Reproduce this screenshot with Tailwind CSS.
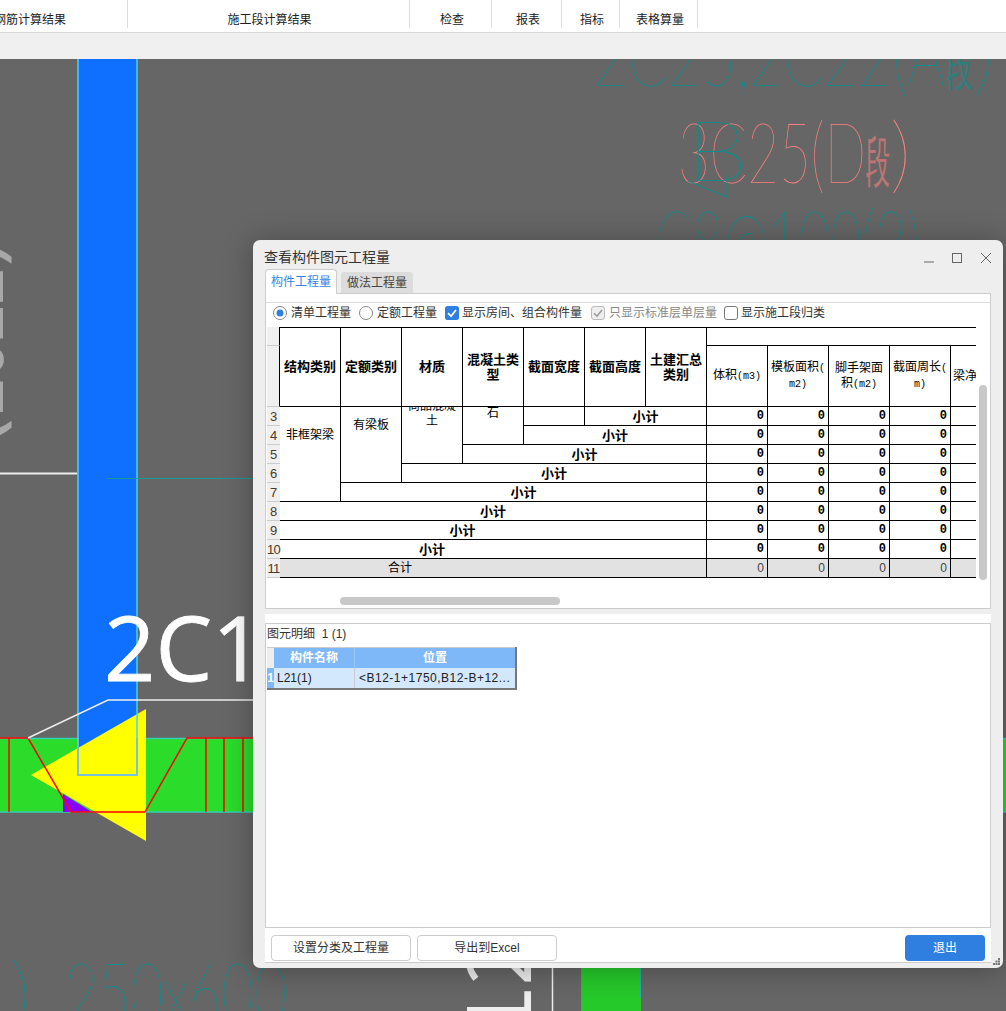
<!DOCTYPE html>
<html lang="en">
<head>
  <meta charset="UTF-8">
  <title>查看构件图元工程量</title>
  <script src="https://cdn.jsdelivr.net/npm/@tailwindcss/browser@4"></script>
</head>
<body class="font-['Liberation_Sans','Noto_Sans_CJK_SC',sans-serif] text-xs text-[#222]">
<div class="relative w-[1006px] h-[1011px] overflow-hidden bg-[#666]">

  <!-- Ribbon -->
  <div class="flex h-[33px] bg-white border-b border-[#d8d8d8] overflow-hidden">
    <div class="w-[128px] h-[28px] shrink-0 border-r border-[#ddd] flex items-end"><span class="-ml-[6px]">钢筋计算结果</span></div>
    <div class="w-[282px] h-[28px] shrink-0 border-r border-[#ddd] flex items-end justify-center pl-[2px]">施工段计算结果</div>
    <div class="w-[82px] h-[28px] shrink-0 border-r border-[#ddd] flex items-end justify-center pl-[3px]">检查</div>
    <div class="w-[70px] h-[28px] shrink-0 border-r border-[#ddd] flex items-end justify-center pl-[3px]">报表</div>
    <div class="w-[58px] h-[28px] shrink-0 border-r border-[#ddd] flex items-end justify-center pl-[3px]">指标</div>
    <div class="w-[78px] h-[28px] shrink-0 border-r border-[#ddd] flex items-end justify-center pl-[3px]">表格算量</div>
  </div>
  <div class="h-[26px] bg-[#f0f0f0]"></div>

  <!-- CAD canvas -->
  <svg class="block w-[1006px] h-[952px]" viewBox="0 59 1006 952" xmlns="http://www.w3.org/2000/svg">
    <rect x="0" y="59" width="1006" height="952" fill="#666"/>
    <!-- green beam -->
    <rect x="0" y="738" width="1006" height="74" fill="#2bdc2b"/>
    <path d="M0 738.500H1006M0 812H1006" stroke="#35d0b0" stroke-width="1.500"/>
    <!-- blue column -->
    <rect x="78" y="59" width="59" height="716" fill="#0f70ff"/>
    <polygon points="146,709 31,775 146,841" fill="#ffff00"/>
    <polygon points="63,794 63,812 92,812" fill="#8a00ff"/>
    <path d="M78 59V775H137V59" fill="none" stroke="#45d2ff" stroke-width="1.500"/>
    <path d="M78 738V775H137V738" fill="none" stroke="#7db8e8" stroke-width="1.500"/>
    <!-- rebar -->
    <path d="M0 738H28L71 812H145L187 738H253" fill="none" stroke="#ff0000" stroke-width="1.500"/>
    <path d="M9 738V812M206 738V812M224 738V812M243 738V812" stroke="#ff0000" stroke-width="1.500"/>
    <!-- leaders -->
    <path d="M28 738L108 700H253" fill="none" stroke="#eeeeee" stroke-width="1.500"/>
    <path d="M0 473.500H77" stroke="#eeeeee" stroke-width="2"/>
    <path d="M107 478.500H253" stroke="#1a9a9a" stroke-width="1"/>
    <path d="M552.500 960V1011" stroke="#eeeeee" stroke-width="1.500"/>
    <!-- green column below the dialog -->
    <rect x="581" y="960" width="60" height="51" fill="#26c92a"/>
    <path d="M581.500 960V1011M640.500 960V998" stroke="#20b0a0" stroke-width="1"/>

    <!-- drawing labels -->
    <text x="104" y="681" font-family="Open Sans" font-size="90" fill="#ffffff" stroke="#ffffff" stroke-width="0.800">2C1</text>
    <text transform="translate(531 1016) rotate(-90)" font-family="Open Sans" font-size="90" fill="#eeeeee" textLength="26" lengthAdjust="spacingAndGlyphs">L</text>
    <text transform="translate(531 986) rotate(-90)" font-family="Open Sans" font-size="90" fill="#eeeeee">2</text>
    <g font-family="Open Sans" fill="#a8a8a8">
      <text transform="translate(-53 240) rotate(90)" font-size="90">(</text>
      <text transform="translate(-53 418) rotate(90)" font-size="90">)</text>
      <text transform="translate(-47 268) rotate(90)" font-size="70" textLength="147" lengthAdjust="spacingAndGlyphs">ZZ0Z</text>
    </g>
    <g font-family="Lato" font-weight="100" font-size="84">
      <text x="593" y="86" fill="#0a8f8f" textLength="352" lengthAdjust="spacingAndGlyphs">2C25,2C22(A</text>
      <text x="947" y="84" font-size="56" fill="#0a8f8f" fill-opacity="0.600" textLength="26" lengthAdjust="spacingAndGlyphs">段</text>
      <text x="973" y="86" fill="#0a8f8f">)</text>
      <text x="655" y="271" fill="#0a8f8f" textLength="265" lengthAdjust="spacingAndGlyphs">C8@100(2)</text>
      <text x="10" y="1023" fill="#0a8f8f">)</text>
      <text x="65" y="1023" fill="#0a8f8f" textLength="222" lengthAdjust="spacingAndGlyphs">250x600</text>
      <text x="678" y="183" fill="#ff8080" textLength="188" lengthAdjust="spacingAndGlyphs">3C25(D</text>
      <text x="866" y="181" font-size="56" fill="#ff8080" fill-opacity="0.600" textLength="24" lengthAdjust="spacingAndGlyphs">段</text>
      <text x="890" y="183" fill="#ff8080">)</text>
      <text x="686" y="181" fill="#0a8f8f" textLength="62" lengthAdjust="spacingAndGlyphs">B</text>
    </g>
    <path d="M688 181L727 197V175" fill="none" stroke="#0a8f8f" stroke-width="1"/>
  </svg>

  <!-- Dialog -->
  <div class="absolute left-[253px] top-[240px] w-[750px] h-[728px] bg-[#eeeeee] rounded-[7px] shadow-[0_2px_30px_rgba(0,0,0,0.3)]">
    <div class="relative h-[29px] flex items-center pl-[11px] pt-[4px] text-sm text-[#333]">
      查看构件图元工程量
      <div class="absolute right-[11px] top-[12px] flex items-center gap-[13px]">
        <svg class="w-[12px] h-[12px] mr-[4px]" viewBox="0 0 12 12"><path d="M1 10H11" stroke="#666" stroke-width="1"/></svg>
        <svg class="w-[12px] h-[12px]" viewBox="0 0 12 12"><rect x="0.500" y="1.500" width="9" height="9" fill="none" stroke="#666" stroke-width="1"/></svg>
        <svg class="w-[12px] h-[12px] ml-[3px]" viewBox="0 0 12 12"><path d="M1 1L11 11M11 1L1 11" stroke="#666" stroke-width="1"/></svg>
      </div>
    </div>

    <!-- Tabs -->
    <div class="flex items-end h-[24px] ml-[12px] gap-[4px] relative z-10">
      <div class="w-[72px] h-[25px] -mb-px bg-white border border-b-0 border-[#ccc] rounded-t-[4px] flex items-center justify-center text-[#2f86e8]">构件工程量</div>
      <div class="w-[72px] h-[21px] bg-[#dcdcdc] rounded-t-[3px] flex items-center justify-center text-[#444]">做法工程量</div>
    </div>

    <div class="mx-[12px]">
      <!-- Top panel -->
      <div class="relative h-[316px] bg-white border border-[#ccc]">
        <div class="h-[9px] border-b border-[#ddd]"></div>
        <div class="flex items-center h-[24px] pb-[5px] pl-[7px] text-[#333]">
          <svg class="w-[14px] h-[14px] shrink-0" viewBox="0 0 14 14"><circle cx="7" cy="7" r="6.500" fill="#fff" stroke="#888"/><circle cx="7" cy="7" r="3.500" fill="#2e7fe0"/></svg>
          <span class="ml-[4px]">清单工程量</span>
          <svg class="w-[14px] h-[14px] shrink-0 ml-[8px]" viewBox="0 0 14 14"><circle cx="7" cy="7" r="6.500" fill="#fff" stroke="#888"/></svg>
          <span class="ml-[4px]">定额工程量</span>
          <svg class="w-[14px] h-[14px] shrink-0 ml-[8px]" viewBox="0 0 14 14"><rect width="14" height="14" rx="2.500" fill="#2e7fe0"/><path d="M3 7.200L6 10.200L11 4" fill="none" stroke="#fff" stroke-width="1.800"/></svg>
          <span class="ml-[3px]">显示房间、组合构件量</span>
          <svg class="w-[14px] h-[14px] shrink-0 ml-[9px]" viewBox="0 0 14 14"><rect x="0.500" y="0.500" width="13" height="13" rx="2.500" fill="#eee" stroke="#bbb"/><path d="M3 7.200L6 10.200L11 4" fill="none" stroke="#999" stroke-width="1.500"/></svg>
          <span class="ml-[4px] text-[#888]">只显示标准层单层量</span>
          <svg class="w-[14px] h-[14px] shrink-0 ml-[7px]" viewBox="0 0 14 14"><rect x="0.500" y="0.500" width="13" height="13" rx="2.500" fill="#fff" stroke="#777"/></svg>
          <span class="ml-[3px]">显示施工段归类</span>
        </div>

        <!-- Quantity table -->
        <div class="ml-px w-[709px] overflow-hidden">
          <table class="table-fixed w-[745px] border-separate border-spacing-0 text-center text-black">
            <colgroup>
              <col class="w-[13px]">
              <col class="w-[61px]"><col class="w-[61px]"><col class="w-[61px]"><col class="w-[61px]"><col class="w-[61px]"><col class="w-[61px]">
              <col class="w-[61px]"><col class="w-[61px]"><col class="w-[61px]"><col class="w-[61px]"><col class="w-[61px]"><col class="w-[61px]">
            </colgroup>
            <tbody>
              <tr class="h-[19px]">
                <td class="bg-[#f0f0f0] border-b border-r border-b-[#ccc] border-r-black"></td>
                <td rowspan="2" class="border-t border-r border-b border-black text-[13px] font-bold">结构类别</td>
                <td rowspan="2" class="border-t border-r border-b border-black text-[13px] font-bold">定额类别</td>
                <td rowspan="2" class="border-t border-r border-b border-black text-[13px] font-bold">材质</td>
                <td rowspan="2" class="border-t border-r border-b border-black text-[13px] font-bold leading-[15px]">混凝土类<br>型</td>
                <td rowspan="2" class="border-t border-r border-b border-black text-[13px] font-bold">截面宽度</td>
                <td rowspan="2" class="border-t border-r border-b border-black text-[13px] font-bold">截面高度</td>
                <td rowspan="2" class="border-t border-r border-b border-black text-[13px] font-bold leading-[15px]">土建汇总<br>类别</td>
                <td colspan="5" class="border-t border-b border-black"></td>
              </tr>
              <tr class="h-[61px]">
                <td class="bg-[#f0f0f0] border-b border-r border-b-[#ccc] border-r-black"></td>
                <td class="border-r border-b border-black leading-[15px]">体积<span class="font-['Liberation_Mono'] text-[10px]">(m3)</span></td>
                <td class="border-r border-b border-black leading-[15px]">模板面积<span class="font-['Liberation_Mono'] text-[10px]">(</span><br><span class="font-['Liberation_Mono'] text-[10px]">m2)</span></td>
                <td class="border-r border-b border-black leading-[15px]">脚手架面<br>积<span class="font-['Liberation_Mono'] text-[10px]">(m2)</span></td>
                <td class="border-r border-b border-black leading-[15px]">截面周长<span class="font-['Liberation_Mono'] text-[10px]">(</span><br><span class="font-['Liberation_Mono'] text-[10px]">m)</span></td>
                <td class="border-b border-black text-left pl-[2px]"><span class="whitespace-nowrap">梁净长</span></td>
              </tr>

              <tr class="h-[19px]">
                <td class="bg-[#f0f0f0] border-b border-[#ccc] text-[13px] leading-none text-[#4a3a2a]">3</td>
                <td rowspan="5" class="border-r border-b border-black align-top pt-[20px]">非框架梁</td>
                <td rowspan="4" class="border-r border-b border-black align-top pt-[10px]">有梁板</td>
                <td rowspan="3" class="border-r border-b border-black align-top"><div class="h-[56px] overflow-hidden"><div class="-mt-[8px] leading-[15px]">商品混凝<br>土</div></div></td>
                <td rowspan="2" class="border-r border-b border-black align-top"><div class="h-[37px] overflow-hidden leading-[12px]">石</div></td>
                <td class="border-r border-b border-black"></td>
                <td colspan="2" class="border-r border-b border-black text-[13px] font-bold leading-none">小计</td>
                <td class="border-r border-b border-black text-right pr-[3px] font-['Liberation_Mono'] font-bold leading-none">0</td>
                <td class="border-r border-b border-black text-right pr-[3px] font-['Liberation_Mono'] font-bold leading-none">0</td>
                <td class="border-r border-b border-black text-right pr-[3px] font-['Liberation_Mono'] font-bold leading-none">0</td>
                <td class="border-r border-b border-black text-right pr-[3px] font-['Liberation_Mono'] font-bold leading-none">0</td>
                <td class="border-b border-black"></td>
              </tr>
              <tr class="h-[19px]">
                <td class="bg-[#f0f0f0] border-b border-[#ccc] text-[13px] leading-none text-[#4a3a2a]">4</td>
                <td colspan="3" class="border-r border-b border-black text-[13px] font-bold leading-none">小计</td>
                <td class="border-r border-b border-black text-right pr-[3px] font-['Liberation_Mono'] font-bold leading-none">0</td>
                <td class="border-r border-b border-black text-right pr-[3px] font-['Liberation_Mono'] font-bold leading-none">0</td>
                <td class="border-r border-b border-black text-right pr-[3px] font-['Liberation_Mono'] font-bold leading-none">0</td>
                <td class="border-r border-b border-black text-right pr-[3px] font-['Liberation_Mono'] font-bold leading-none">0</td>
                <td class="border-b border-black"></td>
              </tr>
              <tr class="h-[19px]">
                <td class="bg-[#f0f0f0] border-b border-[#ccc] text-[13px] leading-none text-[#4a3a2a]">5</td>
                <td colspan="4" class="border-r border-b border-black text-[13px] font-bold leading-none">小计</td>
                <td class="border-r border-b border-black text-right pr-[3px] font-['Liberation_Mono'] font-bold leading-none">0</td>
                <td class="border-r border-b border-black text-right pr-[3px] font-['Liberation_Mono'] font-bold leading-none">0</td>
                <td class="border-r border-b border-black text-right pr-[3px] font-['Liberation_Mono'] font-bold leading-none">0</td>
                <td class="border-r border-b border-black text-right pr-[3px] font-['Liberation_Mono'] font-bold leading-none">0</td>
                <td class="border-b border-black"></td>
              </tr>
              <tr class="h-[19px]">
                <td class="bg-[#f0f0f0] border-b border-[#ccc] text-[13px] leading-none text-[#4a3a2a]">6</td>
                <td colspan="5" class="border-r border-b border-black text-[13px] font-bold leading-none">小计</td>
                <td class="border-r border-b border-black text-right pr-[3px] font-['Liberation_Mono'] font-bold leading-none">0</td>
                <td class="border-r border-b border-black text-right pr-[3px] font-['Liberation_Mono'] font-bold leading-none">0</td>
                <td class="border-r border-b border-black text-right pr-[3px] font-['Liberation_Mono'] font-bold leading-none">0</td>
                <td class="border-r border-b border-black text-right pr-[3px] font-['Liberation_Mono'] font-bold leading-none">0</td>
                <td class="border-b border-black"></td>
              </tr>
              <tr class="h-[19px]">
                <td class="bg-[#f0f0f0] border-b border-[#ccc] text-[13px] leading-none text-[#4a3a2a]">7</td>
                <td colspan="6" class="border-r border-b border-black text-[13px] font-bold leading-none">小计</td>
                <td class="border-r border-b border-black text-right pr-[3px] font-['Liberation_Mono'] font-bold leading-none">0</td>
                <td class="border-r border-b border-black text-right pr-[3px] font-['Liberation_Mono'] font-bold leading-none">0</td>
                <td class="border-r border-b border-black text-right pr-[3px] font-['Liberation_Mono'] font-bold leading-none">0</td>
                <td class="border-r border-b border-black text-right pr-[3px] font-['Liberation_Mono'] font-bold leading-none">0</td>
                <td class="border-b border-black"></td>
              </tr>
              <tr class="h-[19px]">
                <td class="bg-[#f0f0f0] border-b border-[#ccc] text-[13px] leading-none text-[#4a3a2a]">8</td>
                <td colspan="7" class="border-r border-b border-black text-[13px] font-bold leading-none">小计</td>
                <td class="border-r border-b border-black text-right pr-[3px] font-['Liberation_Mono'] font-bold leading-none">0</td>
                <td class="border-r border-b border-black text-right pr-[3px] font-['Liberation_Mono'] font-bold leading-none">0</td>
                <td class="border-r border-b border-black text-right pr-[3px] font-['Liberation_Mono'] font-bold leading-none">0</td>
                <td class="border-r border-b border-black text-right pr-[3px] font-['Liberation_Mono'] font-bold leading-none">0</td>
                <td class="border-b border-black"></td>
              </tr>
              <tr class="h-[19px]">
                <td class="bg-[#f0f0f0] border-b border-[#ccc] text-[13px] leading-none text-[#4a3a2a]">9</td>
                <td colspan="7" class="border-r border-b border-black text-[13px] font-bold leading-none pr-[61px]">小计</td>
                <td class="border-r border-b border-black text-right pr-[3px] font-['Liberation_Mono'] font-bold leading-none">0</td>
                <td class="border-r border-b border-black text-right pr-[3px] font-['Liberation_Mono'] font-bold leading-none">0</td>
                <td class="border-r border-b border-black text-right pr-[3px] font-['Liberation_Mono'] font-bold leading-none">0</td>
                <td class="border-r border-b border-black text-right pr-[3px] font-['Liberation_Mono'] font-bold leading-none">0</td>
                <td class="border-b border-black"></td>
              </tr>
              <tr class="h-[19px]">
                <td class="bg-[#f0f0f0] border-b border-[#ccc] text-[13px] leading-none tracking-[-0.8px] text-[#4a3a2a]">10</td>
                <td colspan="7" class="border-r border-b border-black text-[13px] font-bold leading-none pr-[122px]">小计</td>
                <td class="border-r border-b border-black text-right pr-[3px] font-['Liberation_Mono'] font-bold leading-none">0</td>
                <td class="border-r border-b border-black text-right pr-[3px] font-['Liberation_Mono'] font-bold leading-none">0</td>
                <td class="border-r border-b border-black text-right pr-[3px] font-['Liberation_Mono'] font-bold leading-none">0</td>
                <td class="border-r border-b border-black text-right pr-[3px] font-['Liberation_Mono'] font-bold leading-none">0</td>
                <td class="border-b border-black"></td>
              </tr>
              <tr class="h-[19px]">
                <td class="bg-[#f0f0f0] border-b border-[#ccc] text-[13px] leading-none tracking-[-0.8px] text-[#4a3a2a]">11</td>
                <td colspan="7" class="border-r border-b border-black bg-[#e2e2e2] leading-none pr-[186px]">合计</td>
                <td class="border-r border-b border-black bg-[#e2e2e2] text-right pr-[3px] text-[#444] leading-none">0</td>
                <td class="border-r border-b border-black bg-[#e2e2e2] text-right pr-[3px] text-[#444] leading-none">0</td>
                <td class="border-r border-b border-black bg-[#e2e2e2] text-right pr-[3px] text-[#444] leading-none">0</td>
                <td class="border-r border-b border-black bg-[#e2e2e2] text-right pr-[3px] text-[#444] leading-none">0</td>
                <td class="border-b border-black bg-[#e2e2e2]"></td>
              </tr>
            </tbody>
          </table>
        </div>

        <!-- Scrollbars -->
        <div class="absolute left-[713px] top-[91px] w-[8px] h-[195px] rounded-full bg-[#c8c8c8]"></div>
        <div class="absolute left-[74px] top-[303px] w-[220px] h-[8px] rounded-full bg-[#c8c8c8]"></div>
      </div>

      <!-- Splitter -->
      <div class="h-[5px] bg-[#eeeeee]"></div>
      <div class="h-[9px] bg-white"></div>

      <!-- Detail panel -->
      <div class="h-[305px] bg-white border border-[#ccc]">
        <div class="h-[23px] flex items-center pb-[4px] pl-px text-[#333]"><span>图元明细&nbsp;&nbsp;1 (1)</span></div>
        <div class="ml-px w-[250px] border-r-2 border-b-2 border-[#777]">
          <div class="flex h-[21px] border-t border-[#ccc] text-white font-bold">
            <div class="w-[7px] bg-[#eeeeee]"></div>
            <div class="w-[81px] bg-[#7eb8f8] border-r border-[#9cc8f8] flex items-center justify-center">构件名称</div>
            <div class="flex-1 bg-[#7eb8f8] flex items-center justify-center">位置</div>
          </div>
          <div class="flex h-[20px]">
            <div class="w-[7px] bg-[#7eb8f8] flex items-center justify-center text-white font-bold">1</div>
            <div class="w-[81px] bg-[#d3e8fd] border-r border-[#ccc] flex items-center pl-[3px]">L21(1)</div>
            <div class="flex-1 bg-[#d3e8fd] flex items-center pl-[4px] whitespace-nowrap tracking-[0.5px]">&lt;B12-1+1750,B12-B+12...</div>
          </div>
        </div>
      </div>

      <!-- Buttons -->
      <div class="h-[35px] bg-white border-b border-[#ccc] flex items-start pt-[7px] pl-[6px] pr-[6px] text-[#333]">
        <button class="w-[140px] h-[26px] bg-white border border-[#ccc] rounded-[4px]">设置分类及工程量</button>
        <button class="w-[140px] h-[26px] ml-[6px] bg-white border border-[#ccc] rounded-[4px]">导出到Excel</button>
        <button class="w-[80px] h-[26px] ml-auto bg-[#2e7fe0] text-white rounded-[4px]">退出</button>
      </div>
    </div>

    <!-- Resize grip -->
    <svg class="absolute right-[3px] bottom-[3px] w-[7px] h-[7px]" viewBox="0 0 7 7"><path d="M5 0h2v2H5zM2.500 2.500h2v2h-2zM5 2.500h2v2H5zM0 5h2v2H0zM2.500 5h2v2h-2zM5 5h2v2H5z" fill="#777"/></svg>
  </div>
</div>
</body>
</html>
